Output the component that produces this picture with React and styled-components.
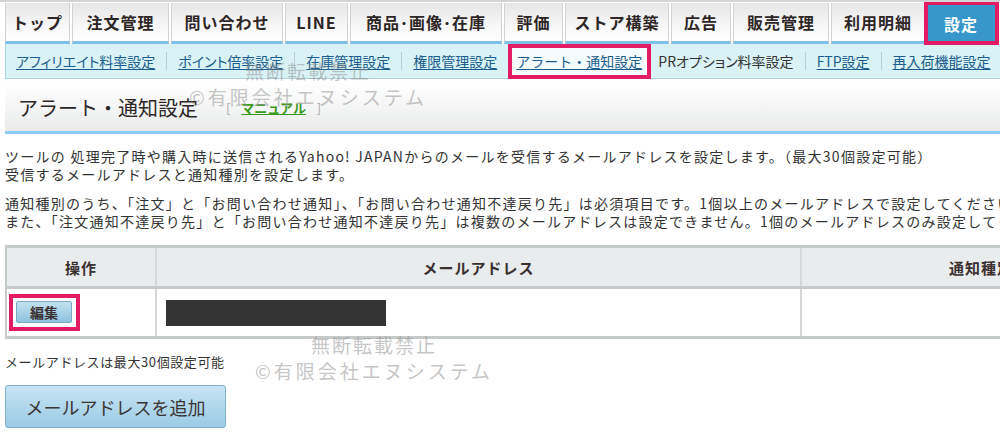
import React from "react";
import styled, { createGlobalStyle } from "styled-components";

const tabs = [
  { label: "トップ", w: 65 },
  { label: "注文管理", w: 97 },
  { label: "問い合わせ", w: 112 },
  { label: "LINE", w: 63 },
  { label: "商品･画像･在庫", w: 152 },
  { label: "評価", w: 59 },
  { label: "ストア構築", w: 104 },
  { label: "広告", w: 60 },
  { label: "販売管理", w: 96 },
  { label: "利用明細", w: 94 },
  { label: "設定", w: 68, active: true },
];

const subLinks = [
  { label: "アフィリエイト料率設定" },
  { label: "ポイント倍率設定" },
  { label: "在庫管理設定" },
  { label: "権限管理設定" },
  { label: "アラート・通知設定", current: true },
  { label: "PRオプション料率設定", plain: true },
  { label: "FTP設定" },
  { label: "再入荷機能設定" },
];

const App = () => {
  return (
    <>
      <GlobalStyle />
      <Page>
        <TabBar>
          {tabs.map((t) => (
            <Tab key={t.label} $w={t.w} $active={t.active}>
              {t.label}
            </Tab>
          ))}
        </TabBar>

        <SubNav>
          {subLinks.map((s, i) => (
            <React.Fragment key={s.label}>
              {i > 0 && !s.current && !subLinks[i - 1].current && <Sep />}
              {s.current ? (
                <CurrentItem>
                  <SubLink href="#">{s.label}</SubLink>
                </CurrentItem>
              ) : s.plain ? (
                <PlainItem>{s.label}</PlainItem>
              ) : (
                <SubLink href="#">{s.label}</SubLink>
              )}
            </React.Fragment>
          ))}
        </SubNav>

        <Heading>
          <Title>アラート・通知設定</Title>
          <Manual>
            [ <a href="#">マニュアル</a> ]
          </Manual>
        </Heading>

        <Para>
          ツールの 処理完了時や購入時に送信されるYahoo! JAPANからのメールを受信するメールアドレスを設定します。（最大30個設定可能）
          <br />
          受信するメールアドレスと通知種別を設定します。
        </Para>
        <Para $gap={11}>
          通知種別のうち、「注文」と「お問い合わせ通知」、「お問い合わせ通知不達戻り先」は必須項目です。1個以上のメールアドレスで設定してください。
          <br />
          また、「注文通知不達戻り先」と「お問い合わせ通知不達戻り先」は複数のメールアドレスは設定できません。1個のメールアドレスのみ設定してください。
        </Para>

        <TableWrap>
          <Table>
            <colgroup>
              <col style={{ width: 150 }} />
              <col style={{ width: 645 }} />
              <col style={{ width: 360 }} />
            </colgroup>
            <thead>
              <tr>
                <Th>操作</Th>
                <Th>メールアドレス</Th>
                <Th>通知種別</Th>
              </tr>
            </thead>
            <tbody>
              <tr>
                <Td>
                  <Marked>
                    <EditButton type="button">編集</EditButton>
                  </Marked>
                </Td>
                <Td>
                  <Redacted />
                </Td>
                <Td />
              </tr>
            </tbody>
          </Table>
        </TableWrap>

        <Note>メールアドレスは最大30個設定可能</Note>
        <AddButton type="button">メールアドレスを追加</AddButton>

        <Watermark $x={188} $y={56}>
          <span>無断転載禁止</span>
          <span>©有限会社エヌシステム</span>
        </Watermark>
        <Watermark $x={254} $y={330}>
          <span>無断転載禁止</span>
          <span>©有限会社エヌシステム</span>
        </Watermark>
      </Page>
    </>
  );
};

export default App;

const GlobalStyle = createGlobalStyle`
  body {
    margin: 0;
    background: #fff;
    overflow: hidden;
    font-family: "Noto Sans CJK JP", "Liberation Sans", sans-serif;
    color: #333;
  }
`;

const Page = styled.div`
  position: relative;
  width: 1000px;
  height: 436px;
  overflow: hidden;
  border-top: 2px solid #d3d3d3;
  box-sizing: border-box;
`;

const TabBar = styled.nav`
  display: flex;
  gap: 2px;
  padding: 1px 0 0 5px;
  background: #fff;
`;

const Tab = styled.div`
  position: relative;
  box-sizing: border-box;
  width: ${(p) => p.$w}px;
  height: 41px;
  flex: none;
  display: flex;
  align-items: center;
  justify-content: center;
  font-size: 16px;
  font-weight: bold;
  letter-spacing: 1px;
  color: ${(p) => (p.$active ? "#fff" : "#2e2626")};
  background: ${(p) =>
    p.$active
      ? "#3797cb"
      : "linear-gradient(#e6e6e6, #f7f7f7 60%, #fff)"};
  border-left: 1px solid #d2d2d2;
  border-right: 1px solid #d2d2d2;
  border-bottom: 3px solid #7fc0ea;

  ${(p) =>
    p.$active &&
    `
    border: none;
    &::after {
      content: "";
      position: absolute;
      left: -3px;
      right: -4px;
      top: -2px;
      bottom: -1px;
      border: 4px solid #e31b63;
    }
  `}
`;

const SubNav = styled.div`
  display: flex;
  align-items: center;
  height: 34px;
  margin-left: 5px;
  padding-left: 10px;
  background: #d9f2f5;
  border-left: 1px solid #a9d5da;
  border-bottom: 1px solid #a9d5da;
  font-size: 14px;
  font-feature-settings: "palt";
  white-space: nowrap;
`;

const SubLink = styled.a`
  color: #1b5d8c;
  text-decoration: underline;
  text-underline-offset: 2px;
`;

const PlainItem = styled.span`
  color: #333;
  margin-left: 7px;
`;

const Sep = styled.span`
  width: 1px;
  height: 18px;
  margin: 0 11px;
  background: #b9cfd2;
  flex: none;
`;

const CurrentItem = styled.span`
  display: flex;
  align-items: center;
  height: 27px;
  margin-left: 11px;
  padding: 0 5px 0 4px;
  background: #f4fbfc;
  border: 4px solid #e31b63;
  font-feature-settings: normal;
`;

const Heading = styled.div`
  display: flex;
  align-items: center;
  height: 47px;
  margin: 5px 0 0 5px;
  padding-left: 13px;
  background: linear-gradient(#fff, #e9eaea);
  border-bottom: 3px solid #8ccdf3;
`;

const Title = styled.h1`
  margin: 0;
  font-size: 20px;
  font-weight: normal;
  color: #2c2626;
`;

const Manual = styled.span`
  margin-left: 28px;
  font-size: 13px;
  color: #aaa;
  word-spacing: 8px;

  a {
    color: #3c9a1c;
    font-weight: bold;
    text-decoration: underline;
    word-spacing: 0;
  }
`;

const Para = styled.p`
  margin: ${(p) => p.$gap || 13}px 0 0 5px;
  font-size: 14px;
  letter-spacing: 1.25px;
  line-height: 18px;
  white-space: nowrap;
  color: #333;
`;

const TableWrap = styled.div`
  margin: 15px 0 0 5px;
`;

const Table = styled.table`
  width: 1155px;
  border-collapse: collapse;
  table-layout: fixed;
  border-left: 2px solid #c6caca;
  border-top: 3px solid #c6caca;
  border-bottom: 3px solid #c6caca;
`;

const Th = styled.th`
  height: 38px;
  padding: 0;
  background: #e8ecec;
  border-right: 2px solid #d5d8d8;
  border-bottom: 3px solid #c6caca;
  font-size: 15px;
  font-weight: bold;
  color: #3a3030;
  letter-spacing: 1px;
`;

const Td = styled.td`
  height: 47px;
  padding: 0 0 0 9px;
  border-right: 2px solid #d5d8d8;
  vertical-align: middle;
`;

const Marked = styled.span`
  display: inline-flex;
  padding: 3px 4px 4px 3px;
  margin-left: -7px;
  border: 4px solid #e31b63;
`;

const EditButton = styled.button`
  width: 56px;
  height: 22px;
  padding: 0;
  font-family: inherit;
  font-size: 14px;
  font-weight: bold;
  color: #3a3030;
  background: linear-gradient(#c2e1f2, #8fc2de);
  border: 1px solid #7aa9c6;
  border-radius: 2px;
`;

const Redacted = styled.div`
  width: 220px;
  height: 26px;
  background: #333;
`;

const Note = styled.div`
  margin: 14px 0 0 5px;
  font-size: 13px;
  letter-spacing: 0.6px;
  line-height: 18px;
  color: #333;
`;

const AddButton = styled.button`
  display: block;
  margin: 14px 0 0 5px;
  width: 221px;
  height: 43px;
  padding: 0;
  font-family: inherit;
  font-size: 18px;
  color: #3a3535;
  background: linear-gradient(#c7e4f4, #9bcbe5);
  border: 1px solid #7fb0ce;
  border-radius: 3px;
`;

const Watermark = styled.div`
  position: absolute;
  left: ${(p) => p.$x}px;
  top: ${(p) => p.$y}px;
  width: 240px;
  display: flex;
  flex-direction: column;
  align-items: center;
  pointer-events: none;
  color: rgba(140, 140, 140, 0.5);
  font-size: 19px;
  line-height: 26px;
  letter-spacing: 2px;

  span:last-child {
    letter-spacing: 3px;
  }
`;
